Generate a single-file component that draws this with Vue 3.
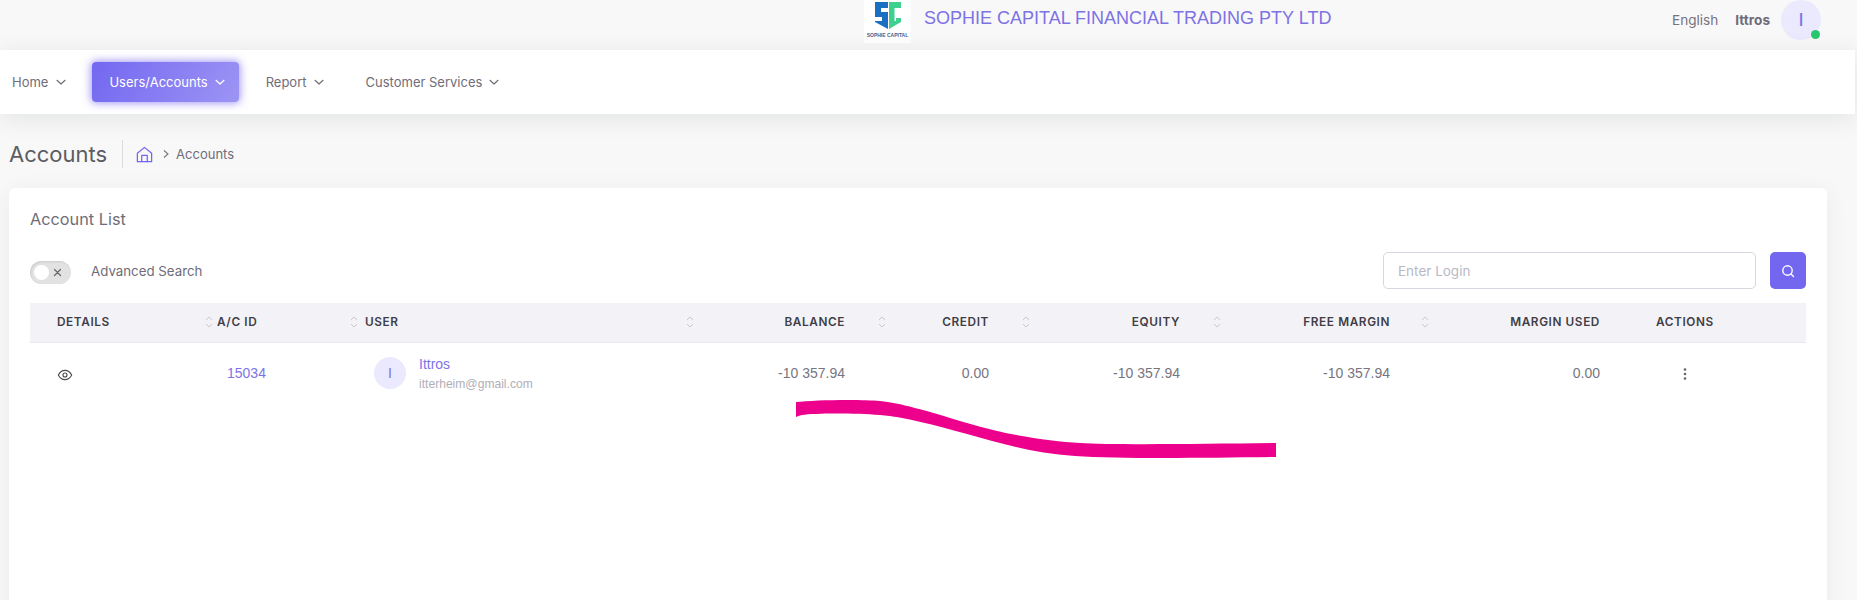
<script setup>
const navItems = [
  { label: 'Home', cls: 'home' },
  { label: 'Users/Accounts', cls: 'active' },
  { label: 'Report', cls: 'report' },
  { label: 'Customer Services', cls: 'customer' }
]
const numeric = [
  { label: 'BALANCE', value: '-10 357.94', cls: '' },
  { label: 'CREDIT', value: '0.00', cls: '' },
  { label: 'EQUITY', value: '-10 357.94', cls: '' },
  { label: 'FREE MARGIN', value: '-10 357.94', cls: 'free' }
]
</script>

<template>
  <div class="page">
    <header class="topbar">
      <div class="brand">
        <div class="logo">
          <svg class="logo-mark" width="29" height="29" viewBox="0 0 29 29">
            <path d="M2 1H15V7H8V11H15V28L2 21V20H9V16H2Z" fill="#1b6fc2" />
            <path d="M16 1H28V7H21.500V20H23V17H28V21L16 28Z" fill="#3fd08f" />
          </svg>
          <span class="logo-text">SOPHIE CAPITAL</span>
        </div>
        <span class="brand-name">SOPHIE CAPITAL FINANCIAL TRADING PTY LTD</span>
      </div>
      <div class="account">
        <span class="lang">English</span>
        <span class="who">Ittros</span>
        <span class="avatar large">I<i class="status"></i></span>
      </div>
    </header>

    <nav class="nav">
      <a v-for="item in navItems" :key="item.label" class="nav-item" :class="item.cls">
        <span>{{ item.label }}</span>
        <svg width="12" height="12" viewBox="0 0 12 12" fill="none" stroke="currentColor" stroke-width="1.200" stroke-linecap="round" stroke-linejoin="round">
          <path d="M2 4.300 6 8l4-3.700" />
        </svg>
      </a>
    </nav>

    <div class="crumbs">
      <h1>Accounts</h1>
      <svg class="home-icon" width="19" height="19" viewBox="0 0 24 24" fill="none" stroke="#7367f0" stroke-width="1.600" stroke-linecap="round" stroke-linejoin="round">
        <path d="M3 10.500 12 3l9 7.500V21H3z" />
        <path d="M8.500 21v-8h7v8" />
      </svg>
      <svg class="crumb-sep" width="8" height="10" viewBox="0 0 8 10" fill="none" stroke="#77757f" stroke-width="1.100">
        <path d="M2 1.500 6 5 2 8.500" />
      </svg>
      <span class="crumb">Accounts</span>
    </div>

    <section class="card">
      <h2>Account List</h2>
      <div class="toolbar">
        <span class="switch"><i class="knob"></i>
          <svg width="9" height="9" viewBox="0 0 9 9" stroke="#666" stroke-width="1.200" stroke-linecap="round"><path d="m1.500 1.500 6 6M7.500 1.500l-6 6" /></svg>
        </span>
        <span class="adv">Advanced Search</span>
        <div class="search-box">
          <input type="text" placeholder="Enter Login" />
          <button type="button" aria-label="Search">
            <svg width="14" height="14" viewBox="0 0 14 14" fill="none" stroke="#fff" stroke-width="1.400" stroke-linecap="round">
              <circle cx="6.500" cy="6.500" r="4.700" />
              <path d="m10 10 2.500 2.500" />
            </svg>
          </button>
        </div>
      </div>

      <div class="table">
        <div class="row head">
          <div class="th details">DETAILS</div>
          <div class="th acid">
            <svg class="sort" width="8" height="14" viewBox="0 0 8 14" fill="none"><path d="M1 5 4 2l3 3M1 9l3 3 3-3" /></svg>
            <span>A/C ID</span>
          </div>
          <div class="th user">
            <svg class="sort" width="8" height="14" viewBox="0 0 8 14" fill="none"><path d="M1 5 4 2l3 3M1 9l3 3 3-3" /></svg>
            <span>USER</span>
            <svg class="sort end" width="8" height="14" viewBox="0 0 8 14" fill="none"><path d="M1 5 4 2l3 3M1 9l3 3 3-3" /></svg>
          </div>
          <div v-for="col in numeric" :key="col.label" class="th num" :class="col.cls">
            <span>{{ col.label }}</span>
            <svg class="sort" width="8" height="14" viewBox="0 0 8 14" fill="none"><path d="M1 5 4 2l3 3M1 9l3 3 3-3" /></svg>
          </div>
          <div class="th used">MARGIN USED</div>
          <div class="th actions">ACTIONS</div>
        </div>

        <div class="row body">
          <div class="td details">
            <svg class="eye" width="16" height="16" viewBox="0 0 24 24" fill="none" stroke="#4b4b4b" stroke-width="1.700">
              <path d="M2 12s3.600-7 10-7 10 7 10 7-3.600 7-10 7-10-7-10-7z" />
              <circle cx="12" cy="12" r="3" />
            </svg>
          </div>
          <div class="td acid"><a class="link">15034</a></div>
          <div class="td user">
            <span class="avatar">I</span>
            <div class="user-text">
              <a class="link">Ittros</a>
              <small>itterheim@gmail.com</small>
            </div>
          </div>
          <div v-for="col in numeric" :key="col.label" class="td num" :class="col.cls">{{ col.value }}</div>
          <div class="td used">0.00</div>
          <div class="td actions">
            <svg width="4" height="14" viewBox="0 0 4 14" fill="#66646e"><circle cx="2" cy="3.500" r="1.300" /><circle cx="2" cy="8" r="1.300" /><circle cx="2" cy="12.500" r="1.300" /></svg>
          </div>
        </div>
      </div>
    </section>

    <svg class="scribble" width="1857" height="600" viewBox="0 0 1857 600">
      <path d="M796 402C812 400 860 399 880 401S924 410 967 423S1050 441 1080 443S1200 444 1276 443V457C1200 458 1119 459 1075 456S1000 443 967 434S905 417 880 415S815 413 802 415Q798 416 796 417Z" fill="#ec008c" />
    </svg>
  </div>
</template>

<style scoped>
.page {
  position: relative;
  height: 600px;
  overflow: hidden;
  background: #f8f8f8;
  font-family: Inter, "Liberation Sans", sans-serif;
  color: #6f6d78;
  font-size: 13px;
}
.topbar {
  height: 50px;
  display: flex;
  justify-content: space-between;
  background: #f8f8f8;
}
.brand {
  display: flex;
  margin-left: 864px;
}
.logo {
  width: 47px;
  height: 43px;
  background: #fff;
  display: flex;
  flex-direction: column;
  align-items: center;
}
.logo-mark {
  margin-top: 1px;
}
.logo-text {
  margin-top: 2px;
  font-family: "Liberation Sans", sans-serif;
  font-size: 5px;
  font-weight: 700;
  color: #4a6390;
  white-space: nowrap;
}
.brand-name {
  margin: 8px 0 0 13px;
  font-family: "Liberation Sans", sans-serif;
  font-size: 18px;
  line-height: 20px;
  color: #7d72e4;
  white-space: nowrap;
}
.account {
  display: flex;
  align-items: flex-start;
  margin-right: 36px;
  line-height: 40px;
  font-size: 13.600px;
}
.lang {
  color: #77747f;
}
.who {
  margin-left: 17px;
  font-weight: 700;
  color: #6e6b7b;
}
.avatar {
  position: relative;
  width: 32px;
  height: 32px;
  flex: none;
  border-radius: 50%;
  background: #ebe9fd;
  color: #7d73e6;
  font-size: 14px;
  font-weight: 500;
  display: flex;
  align-items: center;
  justify-content: center;
}
.avatar.large {
  width: 40px;
  height: 40px;
  margin-left: 11px;
  font-size: 17px;
}
.status {
  position: absolute;
  right: 1px;
  bottom: 1px;
  width: 9px;
  height: 9px;
  border-radius: 50%;
  background: #28c76f;
}
.nav {
  height: 64px;
  width: 1855px;
  background: #fff;
  display: flex;
  align-items: center;
  padding-left: 12px;
  box-sizing: border-box;
  gap: 23px;
  box-shadow: 0 4px 24px rgba(34, 41, 47, 0.1);
  position: relative;
}
.nav-item {
  display: inline-flex;
  align-items: center;
  gap: 6px;
  color: #6f6d78;
  white-space: nowrap;
}
.nav-item.home {
  margin-right: 2px;
  gap: 7px;
}
.nav-item.active {
  height: 40px;
  padding: 0 13px 0 17px;
  border-radius: 4px;
  color: #fff;
  background: linear-gradient(118deg, #7367f0, rgba(115, 103, 240, 0.7));
  box-shadow: 0 0 8px 1px rgba(115, 103, 240, 0.7);
}
.nav-item.report {
  margin-left: 4px;
}
.nav-item.customer {
  margin-left: 18px;
}
.crumbs {
  height: 28px;
  margin: 26px 0 0 9px;
  display: flex;
  align-items: center;
}
.crumbs h1 {
  margin: 0;
  padding-right: 15px;
  height: 28px;
  line-height: 28px;
  border-right: 1px solid #dcdcdf;
  font-size: 22px;
  font-weight: 400;
  color: #5c5c62;
}
.home-icon {
  margin-left: 12px;
}
.crumb-sep {
  margin-left: 8px;
}
.crumb {
  margin-left: 6px;
}
.card {
  margin: 20px 30px 0 9px;
  height: 500px;
  padding: 21px;
  box-sizing: border-box;
  background: #fff;
  border-radius: 6px;
  box-shadow: 0 4px 24px rgba(34, 41, 47, 0.06);
}
.card h2 {
  margin: 0;
  font-size: 16.300px;
  line-height: 20px;
  font-weight: 400;
  color: #6f6d78;
}
.toolbar {
  height: 37px;
  margin-top: 23px;
  display: flex;
  align-items: center;
}
.switch {
  position: relative;
  width: 41px;
  height: 23px;
  border-radius: 12px;
  background: #e2e2e2;
  box-shadow: inset 1px 1px 2px rgba(0, 0, 0, 0.1);
  display: flex;
  align-items: center;
  justify-content: flex-end;
  padding-right: 9px;
  box-sizing: border-box;
  margin-top: 4px;
}
.knob {
  position: absolute;
  left: 4px;
  top: 4px;
  width: 15px;
  height: 15px;
  border-radius: 50%;
  background: #fff;
}
.adv {
  margin-left: 20px;
  font-size: 13.300px;
}
.search-box {
  margin-left: auto;
  display: flex;
  gap: 14px;
}
.search-box input {
  width: 373px;
  height: 37px;
  box-sizing: border-box;
  padding: 0 14px;
  border: 1px solid #d8d6de;
  border-radius: 5px;
  outline: none;
  font: inherit;
  font-size: 13.500px;
  color: #6e6b7b;
}
.search-box input::placeholder {
  color: #b9b9c3;
}
.search-box button {
  width: 36px;
  height: 37px;
  padding: 0;
  border: 0;
  border-radius: 5px;
  background: #7367f0;
  display: flex;
  align-items: center;
  justify-content: center;
}
.table {
  margin-top: 14px;
}
.row {
  display: grid;
  grid-template-columns: 170px 145px 355px 195px 144px 191px 208px 187px 181px;
}
.row.head {
  height: 40px;
  padding-bottom: 1px;
  background: #f3f2f7;
  border-bottom: 1px solid #ebe9f1;
  box-sizing: border-box;
}
.row.body {
  height: 60px;
}
.th {
  display: flex;
  align-items: center;
  font-size: 11.800px;
  font-weight: 600;
  letter-spacing: 0.6px;
  color: #3f3e47;
  white-space: nowrap;
}
.sort {
  flex: none;
  stroke: #c9c8cf;
  stroke-width: 1;
}
.th.details,
.td.details {
  padding-left: 27px;
}
.th.acid {
  padding-left: 5px;
  gap: 4px;
}
.th.user {
  padding-left: 5px;
  gap: 7px;
}
.sort.end {
  margin-left: auto;
  margin-right: 6px;
}
.th.num {
  justify-content: flex-end;
  gap: 33px;
  padding-right: 9px;
}
.th.num.free {
  gap: 31px;
}
.th.used,
.td.used {
  justify-content: flex-end;
  padding-right: 25px;
}
.th.actions {
  padding-left: 31px;
}
.td {
  display: flex;
  align-items: center;
  font-family: "Liberation Sans", sans-serif;
  font-size: 14px;
  color: #77757f;
}
.td.details {
  padding-top: 4px;
}
.eye {
  display: block;
}
.td.acid {
  padding-left: 27px;
}
.td.user {
  padding-left: 29px;
  gap: 13px;
}
.user-text {
  display: flex;
  flex-direction: column;
  gap: 4px;
  margin-top: 1px;
}
.user-text small {
  font-size: 12.100px;
  line-height: 15px;
  color: #b0aeb8;
}
.user-text .link {
  line-height: 17px;
}
.link {
  color: #7d73e6;
}
.td.num {
  justify-content: flex-end;
  padding-right: 50px;
}
.td.num.free {
  padding-right: 48px;
}
.td.actions {
  padding-left: 58px;
}
.scribble {
  position: absolute;
  left: 0;
  top: 0;
  pointer-events: none;
}
</style>
